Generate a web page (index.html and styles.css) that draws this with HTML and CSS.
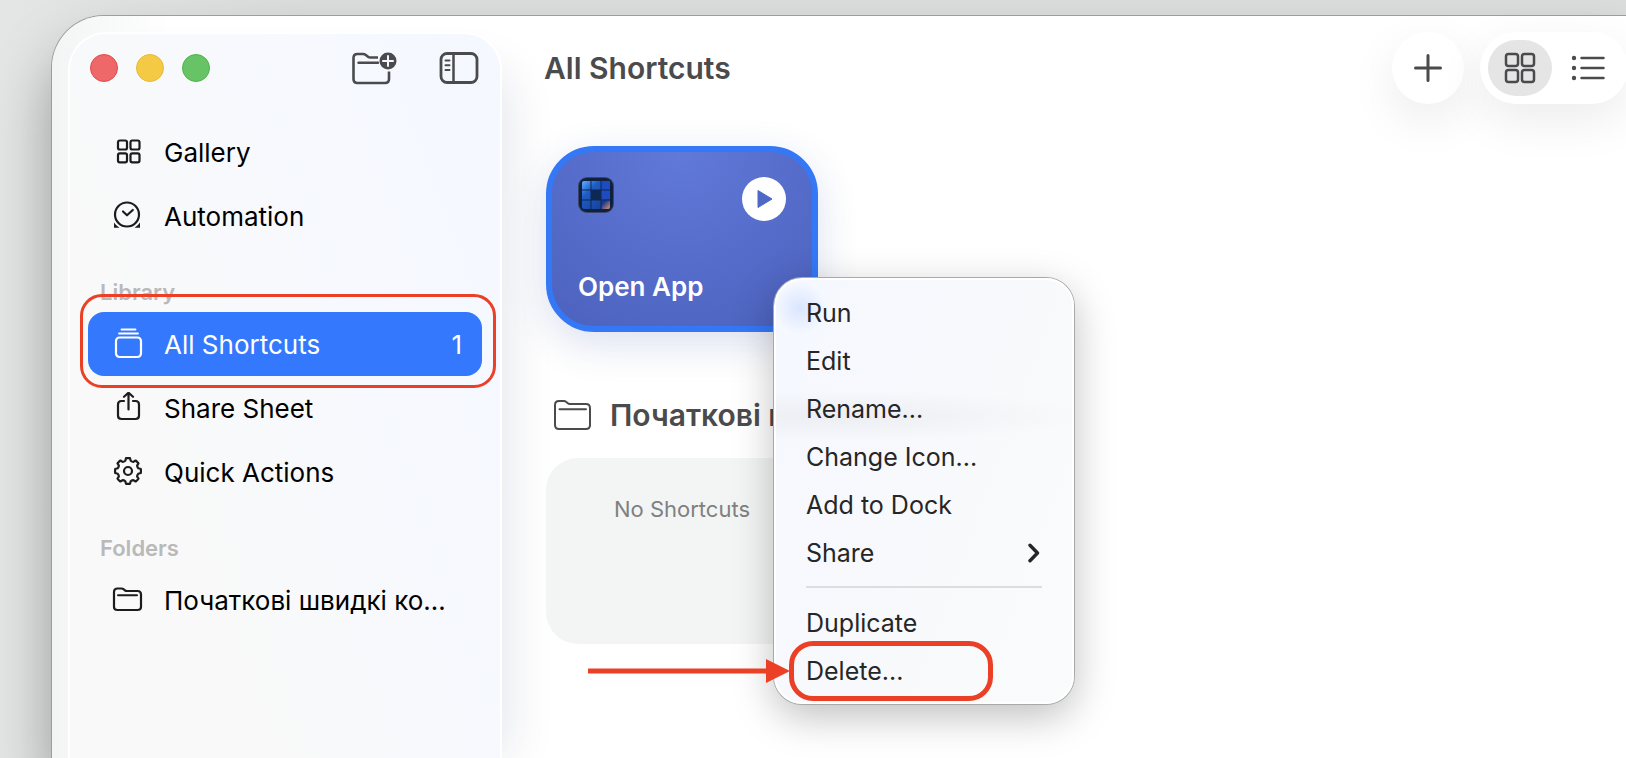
FILE: index.html
```html
<!DOCTYPE html>
<html lang="en">
<head>
<meta charset="UTF-8" />
<meta name="viewport" content="width=device-width, initial-scale=1" />
<title>All Shortcuts</title>
<link rel="stylesheet" href="styles.css">
</head>
<body>
<div class="window">
  <aside class="sidebar">
    <div class="titlebar">
      <div class="lights">
        <button class="light red" aria-label="Close"></button>
        <button class="light yellow" aria-label="Minimize"></button>
        <button class="light green" aria-label="Zoom"></button>
      </div>
      <div class="tools">
        <button class="icon-btn" aria-label="New folder">
          <svg width="46" height="36" viewBox="0 0 46 36" fill="none" stroke="#4b4b4d" stroke-width="2.600">
            <path d="M27 7.500H19.500q-1.500 0-2.500-.8l-2.500-1.900q-1-.8-2.500-.8H6.500Q2.500 4 2.500 8V29q0 4 4 4H34q4 0 4-4V21.500"/>
            <path d="M7.500 12.800H27" stroke-width="2.400" stroke-linecap="round"/>
            <circle cx="37" cy="11" r="8.500" fill="#4b4b4d" stroke="none"/>
            <path d="M37 6v10M32 11h10" stroke="#f5f8fe" stroke-width="2" stroke-linecap="round"/>
          </svg>
        </button>
        <button class="icon-btn" aria-label="Toggle sidebar">
          <svg width="40" height="36" viewBox="0 0 40 36" fill="none" stroke="#4b4b4d" stroke-width="2.800">
            <rect x="2" y="3.500" width="36" height="29" rx="6"/>
            <path d="M14.500 3.500v29" stroke-width="2.500"/>
            <path d="M6.500 10.500h4M6.500 15.300h4M6.500 20.100h4" stroke-width="2" stroke-linecap="round"/>
          </svg>
        </button>
      </div>
    </div>

    <nav>
      <ul class="nav-list">
        <li class="nav-item">
          <a class="nav-link" href="#gallery">
            <svg class="nav-icon" viewBox="0 0 32 32" fill="none" stroke="currentColor" stroke-width="2.200">
              <rect x="6" y="4.500" width="9" height="9" rx="1.800"/>
              <rect x="18.500" y="4.500" width="9" height="9" rx="1.800"/>
              <rect x="6" y="17.300" width="9" height="9" rx="1.800"/>
              <rect x="18.500" y="17.300" width="9" height="9" rx="1.800"/>
            </svg>
            <span class="nav-text">Gallery</span>
          </a>
        </li>
        <li class="nav-item">
          <a class="nav-link" href="#automation">
            <svg class="nav-icon" viewBox="0 0 32 32" fill="none" stroke="currentColor" stroke-width="2.200">
              <circle cx="15" cy="14.500" r="12"/>
              <path d="M11 11.500l4 3.800 5.800-5.300" stroke-linecap="round" stroke-linejoin="round"/>
              <path d="M2 22.500q2 3.200 5.500 5.300H2zM28 22.500q-2 3.200-5.500 5.300H28z" fill="currentColor" stroke="none"/>
            </svg>
            <span class="nav-text">Automation</span>
          </a>
        </li>
      </ul>

      <h2 class="nav-head">Library</h2>
      <ul class="nav-list">
        <li class="nav-item highlight">
          <a class="nav-link active" href="#all">
            <svg class="nav-icon" viewBox="0 0 32 32" fill="none" stroke="currentColor" stroke-width="2.200">
              <rect x="4" y="9.500" width="25" height="19.500" rx="3.500"/>
              <path d="M7 5.500h19M9.500 1.500h14" stroke-width="1.800" stroke-linecap="round"/>
            </svg>
            <span class="nav-text">All Shortcuts</span>
            <span class="nav-count">1</span>
          </a>
        </li>
        <li class="nav-item">
          <a class="nav-link" href="#share">
            <svg class="nav-icon" viewBox="0 0 32 32" fill="none" stroke="currentColor" stroke-width="2.200" stroke-linecap="round" stroke-linejoin="round">
              <path d="M12 9H9.500Q6 9 6 12.500V23.500Q6 27 9.500 27H23.500Q27 27 27 23.500V12.500Q27 9 23.500 9H21"/>
              <path d="M16.500 17.500V1M12 4.800l4.500-4.100L21 4.800"/>
            </svg>
            <span class="nav-text">Share Sheet</span>
          </a>
        </li>
        <li class="nav-item">
          <a class="nav-link" href="#quick">
            <svg class="nav-icon" viewBox="-16 -15 32 32" fill="none" stroke="currentColor" stroke-width="2.200" stroke-linejoin="round">
              <path d="M10.300-2.700L12.800-2A13 13 0 0 1 12.800 2L10.300 2.700Q9.100 4 9.100 5.400L10.500 7.600A13 13 0 0 1 7.600 10.500L5.400 9.100Q4 9.100 2.700 10.300L2 12.800A13 13 0 0 1-2 12.800L-2.700 10.300Q-4 9.100-5.400 9.100L-7.600 10.500A13 13 0 0 1-10.500 7.600L-9.100 5.400Q-9.100 4-10.300 2.700L-12.800 2A13 13 0 0 1-12.800-2L-10.300-2.700Q-9.100-4-9.100-5.400L-10.500-7.600A13 13 0 0 1-7.600-10.500L-5.400-9.100Q-4-9.100-2.700-10.300L-2-12.800A13 13 0 0 1 2-12.800L2.700-10.300Q4-9.100 5.400-9.100L7.600-10.500A13 13 0 0 1 10.500-7.600L9.100-5.400Q9.100-4 10.300-2.700Z"/>
              <circle r="4"/>
            </svg>
            <span class="nav-text">Quick Actions</span>
          </a>
        </li>
      </ul>

      <h2 class="nav-head">Folders</h2>
      <ul class="nav-list">
        <li class="nav-item">
          <a class="nav-link" href="#starter">
            <svg class="nav-icon" viewBox="0 0 32 32" fill="none" stroke="currentColor" stroke-width="2.200">
              <path d="M5.500 4.500H9.500q1.200 0 2 .7l1.700 1.300q.7.500 1.700.5H25.500Q29 7 29 10.500V23Q29 26 25.500 26H5.500Q2 26 2 23V8Q2 4.500 5.500 4.500z"/>
              <path d="M6 11.300H25" stroke-width="2" stroke-linecap="round"/>
            </svg>
            <span class="nav-text">Початкові швидкі команди</span>
          </a>
        </li>
      </ul>
    </nav>
  </aside>

  <main class="content">
    <header class="toolbar">
      <h1 class="title">All Shortcuts</h1>
      <button class="add-btn" aria-label="New shortcut">
        <svg width="28" height="28" viewBox="0 0 28 28" stroke="#4b4b4d" stroke-width="3" stroke-linecap="round">
          <path d="M14 1.500v25M1.500 14h25"/>
        </svg>
      </button>
      <div class="view-switch">
        <button class="view-btn on" aria-label="Grid view">
          <svg width="32" height="32" viewBox="0 0 32 32" fill="none" stroke="#4b4b4d" stroke-width="2.500">
            <rect x="2" y="2" width="12" height="12" rx="2.500"/>
            <rect x="18" y="2" width="12" height="12" rx="2.500"/>
            <rect x="2" y="18" width="12" height="12" rx="2.500"/>
            <rect x="18" y="18" width="12" height="12" rx="2.500"/>
          </svg>
        </button>
        <button class="view-btn" aria-label="List view">
          <svg width="34" height="28" viewBox="0 0 34 28" fill="#4b4b4d" stroke="#4b4b4d" stroke-width="2.500" stroke-linecap="round">
            <path d="M10.500 4h22M10.500 14h22M10.500 24h22"/>
            <circle cx="3" cy="4" r="2.200" stroke="none"/>
            <circle cx="3" cy="14" r="2.200" stroke="none"/>
            <circle cx="3" cy="24" r="2.200" stroke="none"/>
          </svg>
        </button>
      </div>
    </header>

    <section class="grid">
      <article class="card">
        <div class="card-top">
          <svg width="36" height="36" viewBox="0 0 36 36">
            <defs>
              <linearGradient id="tiles" x1="0" y1="0" x2="1" y2="1">
                <stop offset="0" stop-color="#5fb0ff"/>
                <stop offset=".3" stop-color="#1f5cc8"/>
                <stop offset="1" stop-color="#123a8c"/>
              </linearGradient>
              <linearGradient id="corner" x1="0" y1="0" x2="1" y2="1">
                <stop offset=".3" stop-color="#1b3a8e"/>
                <stop offset="1" stop-color="#e09070"/>
              </linearGradient>
            </defs>
            <rect width="36" height="36" rx="9" fill="#3a4668"/>
            <rect x="1" y="1" width="34" height="34" rx="8" fill="#10203f"/>
            <rect x="4" y="4" width="28" height="28" rx="2" fill="url(#tiles)"/>
            <rect x="23" y="4" width="9" height="18" fill="#1d4cc0"/>
            <rect x="13" y="13" width="10" height="10" fill="#0e2856"/>
            <rect x="23" y="23" width="9" height="9" rx="2" fill="url(#corner)"/>
            <path d="M13 4v28M23 4v28M4 13h28M4 23h28" stroke="#10264f" stroke-width="1"/>
          </svg>
          <button class="play-btn" aria-label="Run Open App">
            <svg width="16" height="20" viewBox="0 0 16 20" fill="#4f68c6" stroke="#4f68c6" stroke-linejoin="round">
              <path d="M1 1.500L15 10 1 18.500z"/>
            </svg>
          </button>
        </div>
        <h3 class="card-name">Open App</h3>

        <div class="menu" role="menu">
          <button class="menu-item" role="menuitem">Run</button>
          <button class="menu-item" role="menuitem">Edit</button>
          <button class="menu-item" role="menuitem">Rename...</button>
          <button class="menu-item" role="menuitem">Change Icon...</button>
          <button class="menu-item" role="menuitem">Add to Dock</button>
          <button class="menu-item" role="menuitem">
            Share
            <svg width="14" height="20" viewBox="0 0 14 20" fill="none" stroke="#262626" stroke-width="3.400" stroke-linecap="round" stroke-linejoin="round">
              <path d="M2 2.200L9.500 10 2 17.800"/>
            </svg>
          </button>
          <hr class="menu-line" />
          <button class="menu-item" role="menuitem">Duplicate</button>
          <button class="menu-item marked" role="menuitem">
            Delete...
            <svg class="arrow" width="202" height="24" viewBox="0 0 202 24" fill="#eb4025">
              <path d="M0 9.500h178V0l24 12-24 12v-9.500H0z"/>
            </svg>
          </button>
        </div>
      </article>
    </section>

    <section class="folder">
      <h2 class="folder-head">
        <svg width="38" height="32" viewBox="0 0 38 32" fill="none" stroke="#4b4b4d" stroke-width="2">
          <path d="M5 2H10q1.200 0 2 .7l1.800 1.500q.8.700 2 .7H32Q36 5 36 9V26Q36 30 32 30H5Q1 30 1 26V6Q1 2 5 2z"/>
          <path d="M5.500 10.200H32" stroke-linecap="round"/>
        </svg>
        <span>Початкові швидкі команди</span>
      </h2>
      <div class="empty">No Shortcuts</div>
    </section>
  </main>
</div>
</body>
</html>
```
FILE: styles.css
```css
* {
  box-sizing: border-box;
}
body {
  margin: 0;
  height: 100vh;
  padding: 16px 0 0 52px;
  overflow: hidden;
  display: flex;
  font-family: Inter, "Liberation Sans", sans-serif;
  font-size: 26px;
  color: #000;
  background: linear-gradient(to right, #e4e5e5, #dcdddd 300px);
}
h1, h2, h3, ul {
  margin: 0;
  padding: 0;
}
button {
  font: inherit;
  color: inherit;
  border: none;
  padding: 0;
  background: none;
  cursor: pointer;
}
svg {
  display: block;
  flex: none;
}
.window {
  flex: 1;
  display: flex;
  gap: 42px;
  margin-right: -2px;
  padding: 16px 0 0 16px;
  border-radius: 52px 0 0 0;
  background: linear-gradient(to right, #f3f4f4, #fff 120px);
  box-shadow: 0 0 0 1px #9c9d9d, 0 36px 60px rgba(0, 0, 0, 0.34);
}

/* sidebar */
.sidebar {
  width: 434px;
  flex: none;
  padding: 0 18px;
  border: 2px solid #fff;
  border-bottom: none;
  border-radius: 38px 38px 0 0;
  background: linear-gradient(70deg, #f9f9f9 30%, #f7f9fe 60%, #f4f8ff);
  box-shadow: 24px 20px 50px -20px rgba(20, 30, 80, 0.12);
}
.titlebar {
  display: flex;
  align-items: center;
  justify-content: space-between;
  height: 68px;
  padding: 0 3px 0 2px;
}
.lights {
  display: flex;
  gap: 18px;
}
.light {
  width: 28px;
  height: 28px;
  border-radius: 50%;
}
.red {
  background: #ee6769;
  border: 1px solid #e24b4a;
}
.yellow {
  background: #f4ca44;
  border: 1px solid #e8b93a;
}
.green {
  background: #66c466;
  border: 1px solid #4fb348;
}
.tools {
  display: flex;
  gap: 42px;
}
.nav-list {
  list-style: none;
}
.titlebar + nav {
  padding-top: 18px;
}
.nav-item {
  position: relative;
}
.nav-link {
  display: flex;
  align-items: center;
  gap: 20px;
  height: 64px;
  padding: 0 20px 0 24px;
  border-radius: 16px;
  color: #000;
  text-decoration: none;
}
.nav-icon {
  width: 32px;
  height: 32px;
  color: #1c1c1e;
}
.nav-text {
  flex: 1;
  overflow: hidden;
  white-space: nowrap;
  text-overflow: ellipsis;
}
.active, .active .nav-icon {
  color: #fff;
}
.active {
  background: #3478fe;
}
.nav-head {
  height: 64px;
  padding: 32px 0 0 12px;
  font-size: 22px;
  line-height: 24px;
  font-weight: 600;
  color: #b9b9ba;
}
/* red ring round the selected row */
.highlight::after {
  content: "";
  position: absolute;
  inset: -18px -14px -12px -8px;
  border: 3px solid #eb4025;
  border-radius: 22px;
}

/* content */
.content {
  flex: 1;
  min-width: 0;
}
.toolbar {
  display: flex;
  align-items: center;
  height: 72px;
}
.title {
  flex: 1;
  font-size: 30px;
  font-weight: 600;
  color: #4b4b4d;
}
.add-btn, .view-switch {
  display: flex;
  align-items: center;
  height: 72px;
  border-radius: 36px;
  background: #fff;
  box-shadow: 0 16px 48px rgba(0, 0, 0, 0.08);
}
.add-btn {
  justify-content: center;
  width: 72px;
  margin-right: 16px;
}
.view-switch {
  gap: 4px;
  padding: 0 8px;
}
.view-btn {
  display: flex;
  align-items: center;
  justify-content: center;
  width: 64px;
  height: 56px;
  border-radius: 28px;
}
.on {
  background: #e5e5e5;
}
.grid {
  display: flex;
  padding: 42px 0 0 2px;
}
.card {
  position: relative;
  display: flex;
  flex-direction: column;
  justify-content: space-between;
  width: 272px;
  height: 186px;
  padding: 25px 26px 23px;
  border: 6px solid #3478f6;
  border-radius: 48px;
  background: radial-gradient(circle at 50% 0, #6179d9, #566dcb 50%, #4c62bd);
  box-shadow: 0 12px 40px rgba(40, 60, 160, 0.16);
}
.card-top {
  display: flex;
  justify-content: space-between;
}
.play-btn {
  display: flex;
  align-items: center;
  justify-content: center;
  width: 44px;
  height: 44px;
  padding-left: 2px;
  border-radius: 50%;
  background: #fff;
}
.card-name {
  font-size: 26px;
  line-height: 32px;
  font-weight: 600;
  color: #fff;
}
.folder {
  padding: 60px 0 0 2px;
}
.folder-head {
  display: flex;
  align-items: center;
  gap: 18px;
  height: 46px;
  padding-left: 8px;
  font-size: 30px;
  font-weight: 600;
  color: #4b4b4d;
}
.empty {
  width: 272px;
  height: 186px;
  margin-top: 20px;
  padding-top: 36px;
  border-radius: 32px;
  background: #f3f5f5;
  text-align: center;
  font-size: 22px;
  line-height: 30px;
  color: #808080;
}

/* context menu */
.menu {
  position: absolute;
  left: 222px;
  top: 126px;
  width: 300px;
  padding: 9px 30px 7px;
  border: 2px solid #fff;
  border-radius: 28px;
  background:
    radial-gradient(circle at 24px 28px, #d9e5ff, transparent 26px),
    radial-gradient(ellipse 250px 26px at 60px 136px, #eceef2, transparent),
    linear-gradient(110deg, #f5f8ff, #f8f9fc 50%, #fafbfb);
  box-shadow: 0 0 0 1px #a8a9aa, 0 12px 40px rgba(0, 0, 0, 0.26);
  font-size: 25px;
  color: #262626;
}
.menu-item {
  position: relative;
  display: flex;
  align-items: center;
  justify-content: space-between;
  width: 100%;
  height: 48px;
}
.menu-line {
  height: 2px;
  margin: 9px 0 11px;
  border: none;
  background: #dcdddf;
}
.marked::after {
  content: "";
  position: absolute;
  inset: -6px 49px -6px -17px;
  border: 5px solid #eb4025;
  border-radius: 24px;
}
.arrow {
  position: absolute;
  right: 252px;
  top: 12px;
}
```
